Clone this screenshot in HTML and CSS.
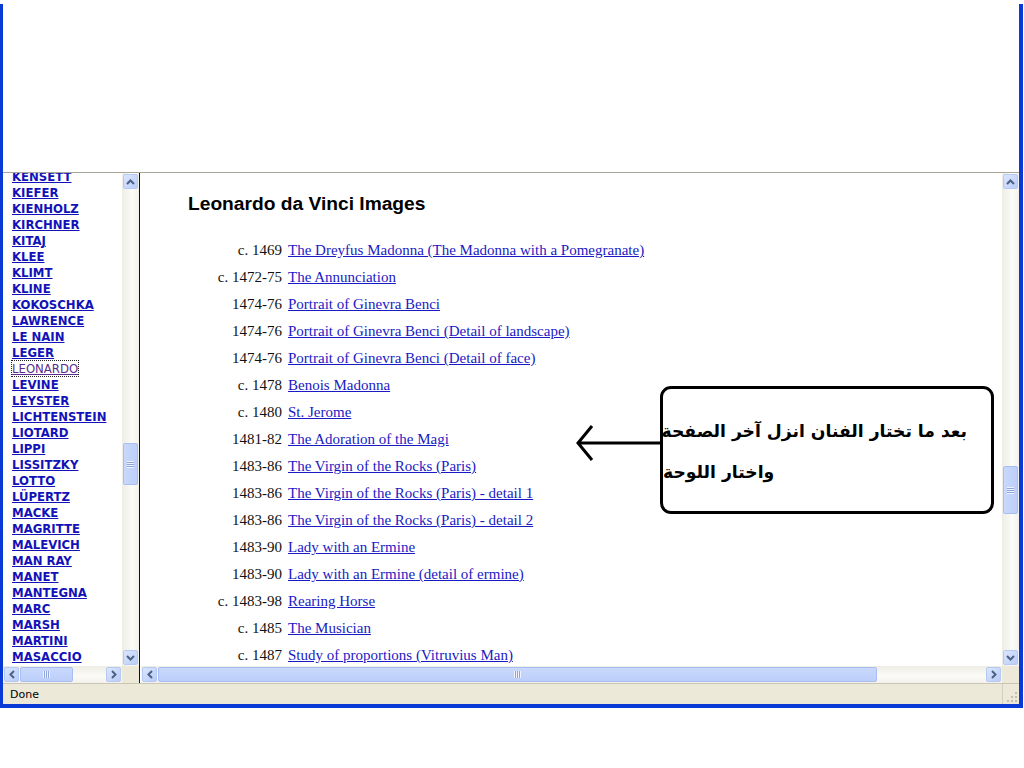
FILE: index.html
```html
<!DOCTYPE html>
<html lang="en">
<head>
  <meta charset="UTF-8" />
  <title>Leonardo da Vinci Images</title>
  <link rel="stylesheet" href="styles.css">
</head>

<body>

  <div class="window">
    <!-- toolbar area (blank) -->
    <div class="chrome"></div>

    <!-- FRAMES -->
    <div class="frames">

      <!-- artist index -->
      <div class="frame frame-left">
        <div class="pane">
          <ul class="artists">
            <li><a href="#">KENSETT</a></li>
            <li><a href="#">KIEFER</a></li>
            <li><a href="#">KIENHOLZ</a></li>
            <li><a href="#">KIRCHNER</a></li>
            <li><a href="#">KITAJ</a></li>
            <li><a href="#">KLEE</a></li>
            <li><a href="#">KLIMT</a></li>
            <li><a href="#">KLINE</a></li>
            <li><a href="#">KOKOSCHKA</a></li>
            <li><a href="#">LAWRENCE</a></li>
            <li><a href="#">LE NAIN</a></li>
            <li><a href="#">LEGER</a></li>
            <li><a href="#" class="visited">LEONARDO</a></li>
            <li><a href="#">LEVINE</a></li>
            <li><a href="#">LEYSTER</a></li>
            <li><a href="#">LICHTENSTEIN</a></li>
            <li><a href="#">LIOTARD</a></li>
            <li><a href="#">LIPPI</a></li>
            <li><a href="#">LISSITZKY</a></li>
            <li><a href="#">LOTTO</a></li>
            <li><a href="#">LÜPERTZ</a></li>
            <li><a href="#">MACKE</a></li>
            <li><a href="#">MAGRITTE</a></li>
            <li><a href="#">MALEVICH</a></li>
            <li><a href="#">MAN RAY</a></li>
            <li><a href="#">MANET</a></li>
            <li><a href="#">MANTEGNA</a></li>
            <li><a href="#">MARC</a></li>
            <li><a href="#">MARSH</a></li>
            <li><a href="#">MARTINI</a></li>
            <li><a href="#">MASACCIO</a></li>
          </ul>
          <div class="vscroll">
            <div class="sb-btn"><svg width="9" height="6" viewBox="0 0 9 6"><path d="M1 5 L4.5 1.5 L8 5" /></svg></div>
            <div class="sb-track"><div class="sb-thumb thumb-left"><span class="grip"></span></div></div>
            <div class="sb-btn"><svg width="9" height="6" viewBox="0 0 9 6"><path d="M1 1 L4.5 4.5 L8 1" /></svg></div>
          </div>
        </div>
        <div class="hbar">
          <div class="hscroll">
            <div class="sb-btn"><svg width="6" height="9" viewBox="0 0 6 9"><path d="M5 1 L1.5 4.5 L5 8" /></svg></div>
            <div class="sb-track"><div class="sb-thumb hthumb-left"><span class="grip"></span></div></div>
            <div class="sb-btn"><svg width="6" height="9" viewBox="0 0 6 9"><path d="M1 1 L4.5 4.5 L1 8" /></svg></div>
          </div>
          <div class="corner"></div>
        </div>
      </div>

      <div class="divider"></div>

      <!-- works of the selected artist -->
      <div class="frame frame-right">
        <div class="pane">
          <div class="content">
            <h2>Leonardo da Vinci Images</h2>
            <div class="works">
              <span class="date">c. 1469</span><a href="#">The Dreyfus Madonna (The Madonna with a Pomegranate)</a>
              <span class="date">c. 1472-75</span><a href="#">The Annunciation</a>
              <span class="date">1474-76</span><a href="#">Portrait of Ginevra Benci</a>
              <span class="date">1474-76</span><a href="#">Portrait of Ginevra Benci (Detail of landscape)</a>
              <span class="date">1474-76</span><a href="#">Portrait of Ginevra Benci (Detail of face)</a>
              <span class="date">c. 1478</span><a href="#">Benois Madonna</a>
              <span class="date">c. 1480</span><a href="#">St. Jerome</a>
              <span class="date">1481-82</span><a href="#">The Adoration of the Magi</a>
              <span class="date">1483-86</span><a href="#">The Virgin of the Rocks (Paris)</a>
              <span class="date">1483-86</span><a href="#">The Virgin of the Rocks (Paris) - detail 1</a>
              <span class="date">1483-86</span><a href="#">The Virgin of the Rocks (Paris) - detail 2</a>
              <span class="date">1483-90</span><a href="#">Lady with an Ermine</a>
              <span class="date">1483-90</span><a href="#">Lady with an Ermine (detail of ermine)</a>
              <span class="date">c. 1483-98</span><a href="#">Rearing Horse</a>
              <span class="date">c. 1485</span><a href="#">The Musician</a>
              <span class="date">c. 1487</span><a href="#">Study of proportions (Vitruvius Man)</a>
            </div>
          </div>
          <div class="vscroll">
            <div class="sb-btn"><svg width="9" height="6" viewBox="0 0 9 6"><path d="M1 5 L4.5 1.5 L8 5" /></svg></div>
            <div class="sb-track"><div class="sb-thumb thumb-right"><span class="grip"></span></div></div>
            <div class="sb-btn"><svg width="9" height="6" viewBox="0 0 9 6"><path d="M1 1 L4.5 4.5 L8 1" /></svg></div>
          </div>
        </div>
        <div class="hbar">
          <div class="hscroll">
            <div class="sb-btn"><svg width="6" height="9" viewBox="0 0 6 9"><path d="M5 1 L1.5 4.5 L5 8" /></svg></div>
            <div class="sb-track"><div class="sb-thumb hthumb-right"><span class="grip"></span></div></div>
            <div class="sb-btn"><svg width="6" height="9" viewBox="0 0 6 9"><path d="M1 1 L4.5 4.5 L1 8" /></svg></div>
          </div>
          <div class="corner"></div>
        </div>
      </div>
    </div>

    <!-- STATUS BAR -->
    <div class="status">
      <span class="status-text">Done</span>
      <div class="status-panel">
        <svg class="sizer" width="12" height="12" viewBox="0 0 12 12">
          <rect x="9" y="1" width="2" height="2" /><rect x="5" y="5" width="2" height="2" /><rect x="9" y="5" width="2" height="2" />
          <rect x="1" y="9" width="2" height="2" /><rect x="5" y="9" width="2" height="2" /><rect x="9" y="9" width="2" height="2" />
        </svg>
      </div>
    </div>
  </div>

  <!-- NOTE -->
  <svg class="pointer" width="92" height="40" viewBox="0 0 92 40">
    <path d="M4 20 H88 M18 3 L4 20 L18 37" />
  </svg>
  <div class="note" dir="rtl">بعد ما تختار الفنان انزل آخر الصفحة<br>واختار اللوحة</div>

</body>
</html>
```

FILE: styles.css
```css
* {
  box-sizing: border-box;
}

body {
  margin: 0;
  background: #fff;
  width: 1024px;
  height: 768px;
  overflow: hidden;
  position: relative;
}

.window {
  margin-top: 4px;
  width: 1023px;
  height: 704px;
  border-left: 3px solid #0a3ad6;
  border-right: 4px solid #0a3ad6;
  border-bottom: 4px solid #0a3ad6;
  display: flex;
  flex-direction: column;
}

.chrome {
  height: 169px;
  background: #fff;
  border-bottom: 1px solid #a8a798;
}

.frames {
  height: 510px;
  display: flex;
}

.frame {
  display: flex;
  flex-direction: column;
}

.frame-left {
  width: 136px;
}

.frame-right {
  flex: 1;
}

.divider {
  width: 1px;
  margin-right: 1px;
  background: #111;
  height: 510px;
}

.pane {
  flex: 1;
  display: flex;
  overflow: hidden;
  background: #fff;
}

/* artist list */
.artists {
  flex: 1;
  list-style: none;
  margin: -5px 0 0;
  padding: 0 0 0 9px;
  overflow: hidden;
}

.artists li {
  line-height: 16px;
  height: 16px;
}

.artists a {
  font-family: "DejaVu Sans Condensed", "Liberation Sans", sans-serif;
  font-weight: bold;
  font-size: 13px;
  color: #1212b8;
  text-decoration: underline;
}

.artists a.visited {
  font-weight: normal;
  color: #5b2d8e;
  outline: 1px dotted #222;
}

/* works list */
.content {
  flex: 1;
  padding: 19px 0 0 47px;
  overflow: hidden;
}

.content h2 {
  margin: 0 0 22px;
  font-family: "Liberation Sans", Arial, sans-serif;
  font-size: 19.2px;
  line-height: 23px;
  font-weight: bold;
  color: #000;
}

.works {
  display: grid;
  grid-template-columns: 94px auto;
  column-gap: 6px;
  justify-content: start;
  font-family: "Liberation Serif", "Times New Roman", serif;
  font-size: 15px;
  line-height: 27px;
}

.works .date {
  text-align: right;
  color: #111;
}

.works a {
  color: #1a1ac4;
  text-decoration: underline;
  white-space: nowrap;
}

/* scrollbars */
.vscroll {
  width: 17px;
  display: flex;
  flex-direction: column;
  background: linear-gradient(to right, #eeede5, #fbfbf8 60%, #f3f1ea);
}

.hbar {
  height: 17px;
  display: flex;
}

.hscroll {
  flex: 1;
  display: flex;
  background: linear-gradient(to bottom, #eeede5, #fbfbf8 60%, #f3f1ea);
}

.corner {
  width: 17px;
  background: #ece9d8;
}

.sb-btn {
  width: 15px;
  height: 15px;
  margin: 1px;
  border: 1px solid #b6c9f5;
  border-radius: 2px;
  background: linear-gradient(135deg, #dbe6fe, #b9cdf8);
  display: flex;
  align-items: center;
  justify-content: center;
}

.sb-btn svg path {
  fill: none;
  stroke: #4d6185;
  stroke-width: 2;
}

.sb-track {
  flex: 1;
  display: flex;
}

.vscroll .sb-track {
  flex-direction: column;
}

.sb-thumb {
  border: 1px solid #a8bdf0;
  border-radius: 2px;
  background: linear-gradient(to right, #c9d8fc, #bccffa);
  display: flex;
  align-items: center;
  justify-content: center;
}

.vscroll .sb-thumb {
  width: 15px;
  margin-left: 1px;
}

.hscroll .sb-thumb {
  height: 15px;
  margin-top: 1px;
  background: linear-gradient(to bottom, #c9d8fc, #bccffa);
}

.vscroll .grip {
  width: 7px;
  height: 7px;
  background: repeating-linear-gradient(to bottom, #eef3ff 0 1px, #8ea6dc 1px 2px);
}

.hscroll .grip {
  width: 7px;
  height: 7px;
  background: repeating-linear-gradient(to right, #eef3ff 0 1px, #8ea6dc 1px 2px);
}

.thumb-left {
  margin-top: 253px;
  height: 42px;
}

.thumb-right {
  margin-top: 276px;
  height: 48px;
}

.hthumb-left {
  width: 53px;
}

.hthumb-right {
  width: 719px;
}

/* status bar */
.status {
  height: 21px;
  background: #ece9d8;
  border-top: 1px solid #c9c6b6;
  display: flex;
  align-items: center;
}

.status-text {
  flex: 1;
  padding-left: 7px;
  font-family: "DejaVu Sans", Tahoma, sans-serif;
  font-size: 11px;
  color: #000;
}

.status-panel {
  width: 17px;
  height: 20px;
  border-left: 1px solid #d4d0c2;
  position: relative;
}

.sizer {
  position: absolute;
  right: 1px;
  bottom: 1px;
  fill: #c2bfaf;
}

/* instruction note laid over the page */
.note {
  position: absolute;
  left: 660px;
  top: 386px;
  width: 334px;
  height: 128px;
  border: 3px solid #000;
  border-radius: 11px;
  background: #fff;
  padding: 22px 24px 0 0;
  font-family: "DejaVu Sans", sans-serif;
  font-weight: bold;
  font-size: 17.2px;
  line-height: 41px;
  text-align: left;
  color: #000;
  white-space: nowrap;
}

.pointer {
  position: absolute;
  left: 574px;
  top: 423px;
}

.pointer path {
  fill: none;
  stroke: #000;
  stroke-width: 3;
}
```
